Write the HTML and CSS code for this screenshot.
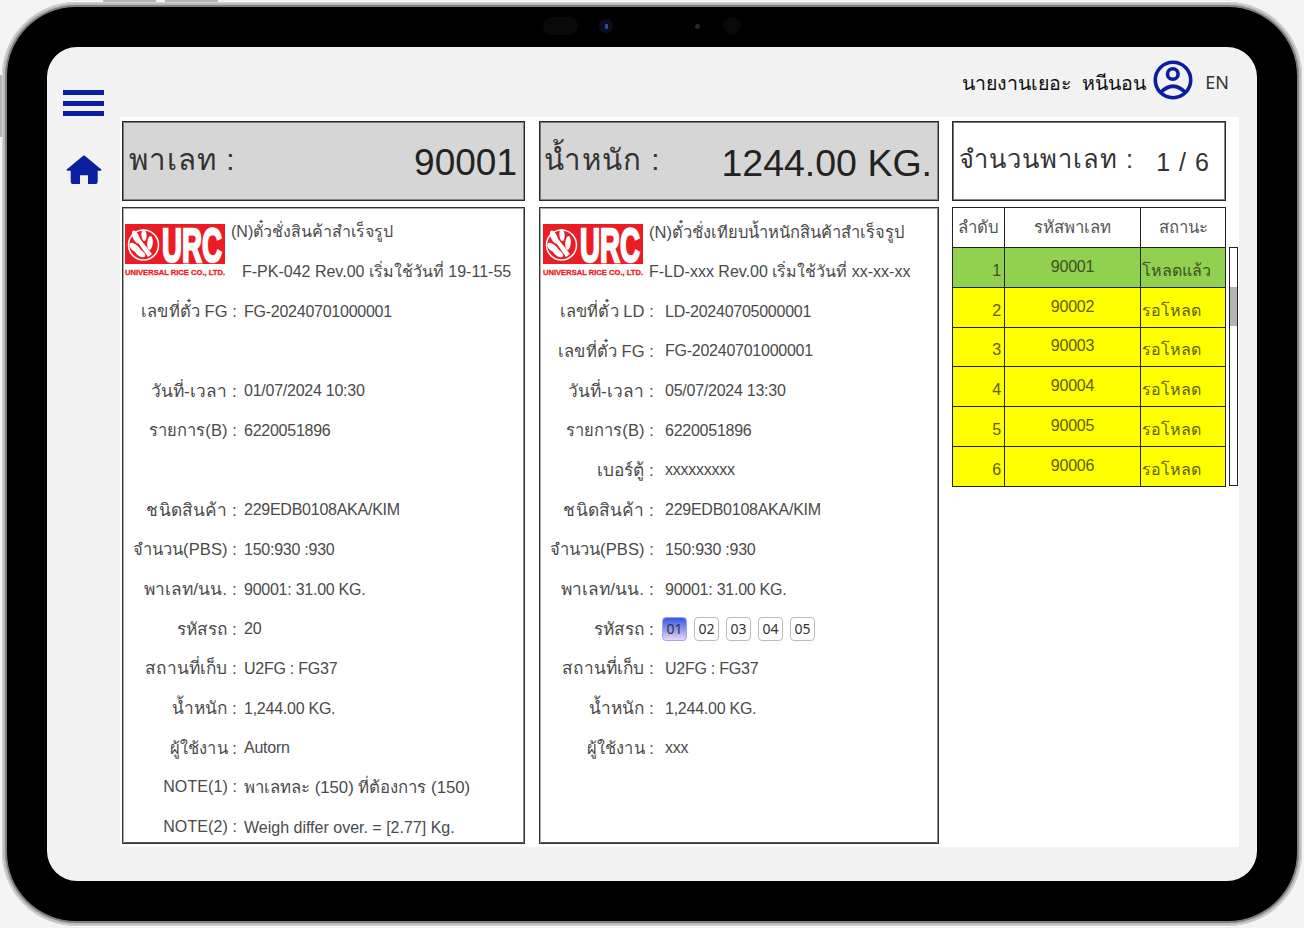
FILE: index.html
```html
<!DOCTYPE html>
<html lang="th">
<head>
<meta charset="utf-8">
<title>Pallet</title>
<link rel="stylesheet" href="styles.css">
</head>
<body>
<div class="device">
  <span class="side-btn top-a"></span>
  <span class="side-btn top-b"></span>
  <span class="side-btn left-a"></span>
  <div class="bezel">
    <div class="camera">
      <span class="cam-pill"></span>
      <span class="cam-lens"><i></i></span>
      <span class="cam-dot"></span>
      <span class="cam-round"></span>
    </div>
    <div class="screen">
      <aside class="sidebar">
        <div class="burger"><span></span><span></span><span></span></div>
        <svg class="home" viewBox="0 0 36 29" aria-hidden="true"><path fill="#0a1f9f" d="M16.6 1.2a2 2 0 0 1 2.8 0L35 14.2c.9.8.4 1.6-.6 1.6h-2.7V26.800a2.200 2.200 0 0 1-2.200 2.200H22V20.200H14V29H6.900a2.200 2.200 0 0 1-2.200-2.200V15.800H1.600c-1 0-1.500-.8-.6-1.600z"/></svg>
      </aside>
      <div class="content">
        <header class="topbar">
          <span class="user-name">นายงานเยอะ&nbsp; หนีนอน</span>
          <svg class="user-icon" viewBox="0 0 40 40" aria-hidden="true"><circle cx="20" cy="20" r="17.700"/><circle cx="19.800" cy="14" r="5.300"/><path d="M7.500 32.500Q20 20 32.500 32.500"/></svg>
          <span class="lang">EN</span>
        </header>
        <main class="panel">
          <div class="stat stat-grey"><span class="stat-label">พาเลท :</span><span class="stat-value">90001</span></div>
          <div class="stat stat-grey stat-tight"><span class="stat-label">น้ำหนัก :</span><span class="stat-value">1244.00 KG.</span></div>
          <div class="stat stat-count"><span class="stat-label">จำนวนพาเลท :</span><span class="count-value">1 / 6</span></div>

          <section class="ticket">
            <div class="ticket-head">
              <svg class="logo" viewBox="0 0 100 53" role="img" aria-label="URC"><rect width="100" height="40" fill="#ed1c24"/><circle cx="18.500" cy="21" r="15" fill="none" stroke="#fff" stroke-width="1.500"/><g fill="#fff"><path d="M23 33 9 13l3-2 15 19z"/><ellipse cx="11" cy="13" rx="3.200" ry="7" transform="rotate(-25 11 13)"/><ellipse cx="10" cy="24" rx="7" ry="3.400" transform="rotate(40 10 24)"/><ellipse cx="15" cy="29" rx="6" ry="3" transform="rotate(35 15 29)"/><ellipse cx="19" cy="11" rx="2.600" ry="6" transform="rotate(-5 19 11)"/><ellipse cx="25" cy="19" rx="2.800" ry="7" transform="rotate(5 25 19)"/></g><text class="logo-mark" x="37" y="37.500" textLength="60" lengthAdjust="spacingAndGlyphs">URC</text><text class="logo-sub" x="0" y="50.500" textLength="100" lengthAdjust="spacingAndGlyphs">UNIVERSAL RICE CO., LTD.</text></svg>
              <div class="head-lines">
                <div class="row-line title">(N)ตั๋วชั่งสินค้าสำเร็จรูป</div>
                <div class="row-line indent">F-PK-042 Rev.00 เริ่มใช้วันที่ 19-11-55</div>
              </div>
            </div>
            <div class="row"><span class="lbl">เลขที่ตั๋ว FG :</span><span class="val">FG-20240701000001</span></div>
            <div class="row"></div>
            <div class="row"><span class="lbl lbl-th">วันที่-เวลา :</span><span class="val">01/07/2024 10:30</span></div>
            <div class="row"><span class="lbl">รายการ(B) :</span><span class="val">6220051896</span></div>
            <div class="row"></div>
            <div class="row"><span class="lbl lbl-th">ชนิดสินค้า :</span><span class="val">229EDB0108AKA/KIM</span></div>
            <div class="row"><span class="lbl">จำนวน(PBS) :</span><span class="val">150:930 :930</span></div>
            <div class="row"><span class="lbl lbl-th">พาเลท/นน. :</span><span class="val">90001: 31.00 KG.</span></div>
            <div class="row"><span class="lbl lbl-th">รหัสรถ :</span><span class="val">20</span></div>
            <div class="row"><span class="lbl lbl-th">สถานที่เก็บ :</span><span class="val">U2FG : FG37</span></div>
            <div class="row"><span class="lbl lbl-th">น้ำหนัก :</span><span class="val">1,244.00 KG.</span></div>
            <div class="row"><span class="lbl">ผู้ใช้งาน :</span><span class="val">Autorn</span></div>
            <div class="row"><span class="lbl lbl-en">NOTE(1) :</span><span class="val-th">พาเลทละ (150) ที่ต้องการ (150)</span></div>
            <div class="row"><span class="lbl lbl-en">NOTE(2) :</span><span class="val-note">Weigh differ over. = [2.77] Kg.</span></div>
          </section>

          <section class="ticket ticket-b">
            <div class="ticket-head">
              <svg class="logo" viewBox="0 0 100 53" role="img" aria-label="URC"><rect width="100" height="40" fill="#ed1c24"/><circle cx="18.500" cy="21" r="15" fill="none" stroke="#fff" stroke-width="1.500"/><g fill="#fff"><path d="M23 33 9 13l3-2 15 19z"/><ellipse cx="11" cy="13" rx="3.200" ry="7" transform="rotate(-25 11 13)"/><ellipse cx="10" cy="24" rx="7" ry="3.400" transform="rotate(40 10 24)"/><ellipse cx="15" cy="29" rx="6" ry="3" transform="rotate(35 15 29)"/><ellipse cx="19" cy="11" rx="2.600" ry="6" transform="rotate(-5 19 11)"/><ellipse cx="25" cy="19" rx="2.800" ry="7" transform="rotate(5 25 19)"/></g><text class="logo-mark" x="37" y="37.500" textLength="60" lengthAdjust="spacingAndGlyphs">URC</text><text class="logo-sub" x="0" y="50.500" textLength="100" lengthAdjust="spacingAndGlyphs">UNIVERSAL RICE CO., LTD.</text></svg>
              <div class="head-lines">
                <div class="row-line title-long">(N)ตั๋วชั่งเทียบน้ำหนักสินค้าสำเร็จรูป</div>
                <div class="row-line">F-LD-xxx Rev.00 เริ่มใช้วันที่ xx-xx-xx</div>
              </div>
            </div>
            <div class="row"><span class="lbl">เลขที่ตั๋ว LD :</span><span class="val">LD-20240705000001</span></div>
            <div class="row"><span class="lbl">เลขที่ตั๋ว FG :</span><span class="val">FG-20240701000001</span></div>
            <div class="row"><span class="lbl lbl-th">วันที่-เวลา :</span><span class="val">05/07/2024 13:30</span></div>
            <div class="row"><span class="lbl">รายการ(B) :</span><span class="val">6220051896</span></div>
            <div class="row"><span class="lbl lbl-th">เบอร์ตู้ :</span><span class="val">xxxxxxxxx</span></div>
            <div class="row"><span class="lbl lbl-th">ชนิดสินค้า :</span><span class="val">229EDB0108AKA/KIM</span></div>
            <div class="row"><span class="lbl">จำนวน(PBS) :</span><span class="val">150:930 :930</span></div>
            <div class="row"><span class="lbl lbl-th">พาเลท/นน. :</span><span class="val">90001: 31.00 KG.</span></div>
            <div class="row"><span class="lbl lbl-th">รหัสรถ :</span>
              <span class="chips"><span class="chip chip-on">01</span><span class="chip">02</span><span class="chip">03</span><span class="chip">04</span><span class="chip">05</span></span>
            </div>
            <div class="row"><span class="lbl lbl-th">สถานที่เก็บ :</span><span class="val">U2FG : FG37</span></div>
            <div class="row"><span class="lbl lbl-th">น้ำหนัก :</span><span class="val">1,244.00 KG.</span></div>
            <div class="row"><span class="lbl">ผู้ใช้งาน :</span><span class="val">xxx</span></div>
          </section>

          <section class="list">
            <table class="pallets">
              <thead><tr><th class="c-no">ลำดับ</th><th class="c-code">รหัสพาเลท</th><th class="c-state">สถานะ</th></tr></thead>
              <tbody>
                <tr class="done"><td class="no">1</td><td class="code">90001</td><td class="state">โหลดแล้ว</td></tr>
                <tr class="wait"><td class="no">2</td><td class="code">90002</td><td class="state">รอโหลด</td></tr>
                <tr class="wait"><td class="no">3</td><td class="code">90003</td><td class="state">รอโหลด</td></tr>
                <tr class="wait"><td class="no">4</td><td class="code">90004</td><td class="state">รอโหลด</td></tr>
                <tr class="wait"><td class="no">5</td><td class="code">90005</td><td class="state">รอโหลด</td></tr>
                <tr class="wait"><td class="no">6</td><td class="code">90006</td><td class="state">รอโหลด</td></tr>
              </tbody>
            </table>
            <div class="scroll"><div class="scroll-thumb"></div></div>
          </section>
        </main>
      </div>
    </div>
  </div>
</div>
</body>
</html>
```
FILE: styles.css
```css
* { box-sizing: border-box; }
html, body { margin: 0; height: 100%; }
body {
  background: #f3f3f3;
  font-family: "Liberation Sans", "Noto Sans", sans-serif;
  color: #4a4a4a;
  overflow: hidden;
}
.device {
  position: relative;
  width: 1300px;
  height: 924px;
  margin: 2px 2px 2px;
  padding: 5px;
  border-radius: 74px;
  background: #bdbdbd;
  box-shadow: inset 0 0 0 1px #d4d4d4;
}
.side-btn { position: absolute; background: #b5b5b5; }
.top-a { left: 101px; top: -2px; width: 53px; height: 2px; }
.top-b { left: 163px; top: -2px; width: 53px; height: 2px; }
.left-a { left: -2px; top: 73px; width: 2px; height: 62px; }
.bezel {
  position: relative;
  height: 100%;
  padding: 40px;
  border-radius: 69px;
  background: #000;
  box-shadow: 0 0 0 2px #7f7f7f;
}
.camera {
  position: absolute;
  left: 536px;
  top: 10px;
  display: flex;
  align-items: center;
  height: 18px;
}
.cam-pill { width: 35px; height: 18px; border-radius: 9px; background: #090909; }
.cam-lens {
  display: flex;
  align-items: center;
  justify-content: center;
  width: 14px;
  height: 14px;
  margin-left: 21px;
  border-radius: 50%;
  background: #0b0d1c;
}
.cam-lens i { width: 3px; height: 5px; border-radius: 1px; background: #2b4bb0; }
.cam-dot { width: 5px; height: 5px; margin-left: 82px; border-radius: 50%; background: #2a2a2a; }
.cam-round { width: 18px; height: 18px; margin-left: 23px; border-radius: 50%; background: #090909; }

.screen {
  display: grid;
  grid-template-columns: 73px 1fr;
  height: 100%;
  border-radius: 30px;
  background: #f2f2f2;
  overflow: hidden;
}
.sidebar {
  display: flex;
  flex-direction: column;
  padding: 43px 0 0 16px;
}
.burger {
  display: flex;
  flex-direction: column;
  justify-content: space-between;
  width: 41px;
  height: 26px;
}
.burger span { height: 5px; background: #0a1f9f; }
.home { width: 36px; height: 29px; margin: 39px 0 0 3px; }

.content { display: flex; flex-direction: column; padding: 0 18px 34px 0; }
.topbar {
  display: flex;
  align-items: center;
  justify-content: flex-end;
  height: 70px;
  padding: 0 10px 0 0;
}
.user-name { font-family: "Noto Sans", sans-serif; font-size: 19.600px; color: #111; padding-top: 1px; }
.user-icon { width: 40px; height: 40px; margin: 0 12px 5px 7px; fill: none; stroke: #0a1f9f; stroke-width: 3.600; }
.lang { font-family: "Noto Sans", sans-serif; font-size: 18px; color: #333; }

.panel {
  display: grid;
  grid-template-columns: 403px 400px 286px;
  grid-template-rows: 80px 637px;
  column-gap: 14px;
  row-gap: 6px;
  height: 730px;
  padding: 4px 0 0 2px;
  background: #fff;
}
.panel > :nth-child(3), .panel > .list { margin-left: -1px; }
.stat {
  display: flex;
  align-items: center;
  justify-content: space-between;
  padding: 0 7px 0 6px;
  border: 1px solid #2a2a2a;
  box-shadow: inset 1px 1px 0 #777, inset -1px -1px 0 #888;
  font-size: 37px;
  color: #222;
  white-space: nowrap;
}
.stat-grey { background: #d6d6d6; }
.stat-tight { padding: 0 6px 0 4px; }
.stat-tight .stat-value { font-size: 37.500px; }
.stat-count { width: 274px; justify-content: flex-start; padding-left: 6px; }
.stat-label { padding-bottom: 4px; font-size: 29.500px; color: #333; letter-spacing: 1px; }
.stat-value { padding-top: 4px; }
.stat-count .stat-label { font-size: 25.500px; }
.count-value { margin-left: 22px; padding-top: 3px; font-size: 25px; color: #333; letter-spacing: 1px; }

.ticket {
  height: 637px;
  padding-top: 4px;
  border: 1px solid #333;
  box-shadow: inset 1px 1px 0 #aaa, inset -1px 0 0 #888, inset 0 -1px 0 #555;
  overflow: hidden;
  font-size: 16px;
}
.ticket-head { display: grid; grid-template-columns: 100px 1fr; column-gap: 6px; padding-left: 2px; }
.ticket-b .ticket-head { padding-left: 3px; column-gap: 6px; }
.logo { width: 100px; height: 53px; margin-top: 12px; overflow: visible; }
.logo-mark { font: 700 48px "Liberation Sans", sans-serif; fill: #fff; stroke: #fff; stroke-width: 2.400; }
.logo-sub { font: 700 7.500px "Liberation Sans", sans-serif; fill: #ed1c24; stroke: #ed1c24; stroke-width: .3; }
.row-line { display: flex; align-items: center; height: 39.700px; white-space: nowrap; }
.title { font-size: 16px; }
.title-long { font-size: 16.500px; }
.head-lines { min-width: 0; height: 79.400px; }
.indent { padding-left: 11px; }
.row {
  display: grid;
  grid-template-columns: 114px 1fr;
  column-gap: 7px;
  align-items: center;
  height: 39.700px;
  white-space: nowrap;
}
.ticket-b .row { column-gap: 11px; }
.lbl { text-align: right; font-size: 16.500px; letter-spacing: .1px; }
.lbl-th { font-size: 17.300px; }
.lbl-en { font-size: 16px; }
.val { padding-top: 1px; letter-spacing: -.25px; }
.val-th { font-size: 16.750px; }
.val-note { padding-top: 1px; font-size: 16px; }
.chips { display: flex; gap: 7px; margin-left: -3px; }
.chip {
  display: flex;
  align-items: center;
  justify-content: center;
  width: 25px;
  height: 24px;
  border: 1px solid #bbb;
  border-radius: 4px;
  font-family: "Noto Sans", sans-serif;
  font-size: 14px;
  color: #333;
}
.chip-on { background: linear-gradient(#3158e6, #ead6fa); border-color: #9aa6ea; }

.list { display: flex; align-items: flex-start; gap: 3px; }
.pallets {
  width: 274px;
  height: 279px;
  table-layout: fixed;
  border-collapse: collapse;
  font-size: 16px;
  letter-spacing: -.2px;
  color: #555;
}
.pallets th, .pallets td { padding: 0; border: 1px solid #222; }
.pallets th { height: 40px; padding-bottom: 2px; font-size: 16.750px; font-weight: 400; letter-spacing: 0; }
.pallets td { height: 39.800px; }
.c-no { width: 52px; }
.c-code { width: 136px; }
.done { background: #92d050; color: #3a5220; }
.wait { background: #ff0; color: #5e5e00; }
.no { padding: 7px 3px 0 0 !important; text-align: right; }
.code { padding-bottom: 1px !important; text-align: center; }
.state { padding: 6px 0 0 1px !important; letter-spacing: 0; white-space: nowrap; }
.scroll {
  width: 9px;
  height: 239px;
  margin-top: 40px;
  border: 1px solid #222;
  background: #fff;
}
.scroll-thumb { height: 39px; margin-top: 39px; background: #b4b4b4; }
```
